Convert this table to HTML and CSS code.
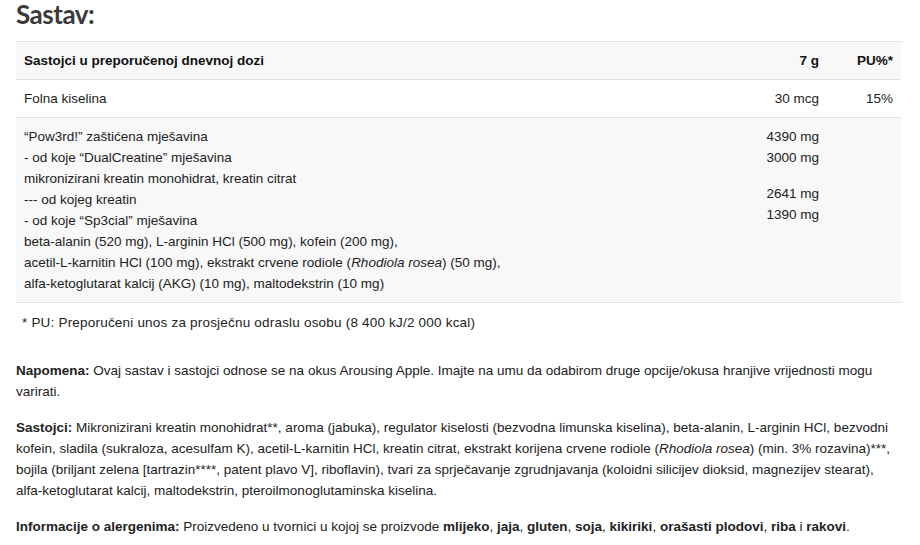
FILE: index.html
```html
<!DOCTYPE html>
<html lang="hr">
<head>
<meta charset="utf-8">
<title>Sastav</title>
<link rel="stylesheet" href="styles.css">
</head>
<body>
<div class="page">
  <h2 class="title">Sastav:</h2>
  <table class="facts">
    <thead>
      <tr class="shade">
        <th class="name">Sastojci u preporučenoj dnevnoj dozi</th>
        <th class="num">7 g</th>
        <th class="num pct">PU%*</th>
      </tr>
    </thead>
    <tbody>
      <tr>
        <td class="name">Folna kiselina</td>
        <td class="num">30 mcg</td>
        <td class="num pct">15%</td>
      </tr>
      <tr class="shade multi">
        <td class="name">
          <div>“Pow3rd!” zaštićena mješavina</div>
          <div>- od koje “DualCreatine” mješavina</div>
          <div>mikronizirani kreatin monohidrat, kreatin citrat</div>
          <div>--- od kojeg kreatin</div>
          <div>- od koje “Sp3cial” mješavina</div>
          <div>beta-alanin (520 mg), L-arginin HCl (500 mg), kofein (200 mg),</div>
          <div>acetil-L-karnitin HCl (100 mg), ekstrakt crvene rodiole (<i>Rhodiola rosea</i>) (50 mg),</div>
          <div>alfa-ketoglutarat kalcij (AKG) (10 mg), maltodekstrin (10 mg)</div>
        </td>
        <td class="num">
          <div>4390 mg</div>
          <div>3000 mg</div>
          <div class="gap"></div>
          <div>2641 mg</div>
          <div>1390 mg</div>
        </td>
        <td class="num pct"></td>
      </tr>
    </tbody>
  </table>
  <p class="foot">* PU: Preporučeni unos za prosječnu odraslu osobu (8 400 kJ/2 000 kcal)</p>
  <p class="para first"><b>Napomena:</b> Ovaj sastav i sastojci odnose se na okus Arousing Apple. Imajte na umu da odabirom druge opcije/okusa hranjive vrijednosti mogu varirati.</p>
  <p class="para"><b>Sastojci:</b> Mikronizirani kreatin monohidrat**, aroma (jabuka), regulator kiselosti (bezvodna limunska kiselina), beta-alanin, L-arginin HCl, bezvodni kofein, sladila (sukraloza, acesulfam K), acetil-L-karnitin HCl, kreatin citrat, ekstrakt korijena crvene rodiole (<i>Rhodiola rosea</i>) (min. 3% rozavina)***, bojila (briljant zelena [tartrazin****, patent plavo V], riboflavin), tvari za sprječavanje zgrudnjavanja (koloidni silicijev dioksid, magnezijev stearat), alfa-ketoglutarat kalcij, maltodekstrin, pteroilmonoglutaminska kiselina.</p>
  <p class="para"><b>Informacije o alergenima:</b> Proizvedeno u tvornici u kojoj se proizvode <b>mlijeko</b>, <b>jaja</b>, <b>gluten</b>, <b>soja</b>, <b>kikiriki</b>, <b>orašasti plodovi</b>, <b>riba</b> i <b>rakovi</b>.</p>
</div>
</body>
</html>
```

FILE: styles.css
```css
html, body {
  margin: 0;
  padding: 0;
  background: #ffffff;
}
body {
  font-family: "Liberation Sans", Arial, sans-serif;
  font-size: 13.5px;
  color: #222222;
}
.page {
  padding: 0 19px 0 16px;
}
.title {
  margin: 0;
  height: 41px;
  font-family: Lato, "Liberation Sans", sans-serif;
  font-size: 26px;
  line-height: 28px;
  font-weight: 700;
  color: #3a3a3a;
  letter-spacing: -0.5px;
}
.facts {
  width: 100%;
  border-collapse: collapse;
  border-top: 1px solid #e2e2e2;
}
.facts tr {
  border-bottom: 1px solid #e2e2e2;
}
.facts th, .facts td {
  padding: 10px 8px 9px;
  line-height: 18px;
  vertical-align: top;
  text-align: left;
  font-weight: 400;
}
.facts th {
  font-weight: 700;
  color: #111111;
}
.facts .num {
  text-align: right;
  white-space: nowrap;
}
.facts .pct {
  width: 58px;
}
.shade {
  background: #f8f8f8;
}
.multi td {
  padding-top: 8px;
  padding-bottom: 8px;
  line-height: 21px;
}
.multi .gap {
  height: 15px;
}
.foot {
  margin: 9px 0 0 6px;
  line-height: 21px;
  letter-spacing: 0.2px;
}
.para {
  margin: 15px 0 0;
  line-height: 21px;
}
.para.first {
  margin-top: 27px;
}
```
